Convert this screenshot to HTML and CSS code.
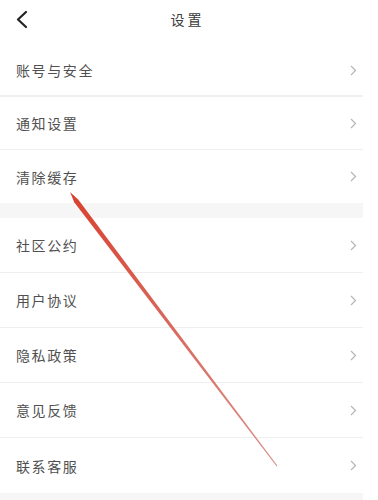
FILE: index.html
```html
<!DOCTYPE html>
<html lang="zh">
<head>
<meta charset="utf-8">
<link rel="stylesheet" href="styles.css">
</head>
<body>
<div class="page">
  <header class="header">
    <svg class="back" width="14" height="20" viewBox="0 0 14 20"><polyline points="10,3 2,10.5 10,18" fill="none" stroke="#222" stroke-width="2.2" stroke-linecap="round" stroke-linejoin="round"/></svg>
    <div class="title">设置</div>
  </header>
  <div class="group g1">
    <div class="row first"><span>账号与安全</span><svg class="chev" width="7" height="11" viewBox="0 0 7 11"><polyline points="1,1 5.5,5.5 1,10" fill="none" stroke="#b5b5b5" stroke-width="1.2"/></svg></div>
    <div class="row"><span>通知设置</span><svg class="chev" width="7" height="11" viewBox="0 0 7 11"><polyline points="1,1 5.5,5.5 1,10" fill="none" stroke="#b5b5b5" stroke-width="1.2"/></svg></div>
    <div class="row last"><span>清除缓存</span><svg class="chev" width="7" height="11" viewBox="0 0 7 11"><polyline points="1,1 5.5,5.5 1,10" fill="none" stroke="#b5b5b5" stroke-width="1.2"/></svg></div>
  </div>
  <div class="gap"></div>
  <div class="group g2">
    <div class="row"><span>社区公约</span><svg class="chev" width="7" height="11" viewBox="0 0 7 11"><polyline points="1,1 5.5,5.5 1,10" fill="none" stroke="#b5b5b5" stroke-width="1.2"/></svg></div>
    <div class="row"><span>用户协议</span><svg class="chev" width="7" height="11" viewBox="0 0 7 11"><polyline points="1,1 5.5,5.5 1,10" fill="none" stroke="#b5b5b5" stroke-width="1.2"/></svg></div>
    <div class="row"><span>隐私政策</span><svg class="chev" width="7" height="11" viewBox="0 0 7 11"><polyline points="1,1 5.5,5.5 1,10" fill="none" stroke="#b5b5b5" stroke-width="1.2"/></svg></div>
    <div class="row"><span>意见反馈</span><svg class="chev" width="7" height="11" viewBox="0 0 7 11"><polyline points="1,1 5.5,5.5 1,10" fill="none" stroke="#b5b5b5" stroke-width="1.2"/></svg></div>
    <div class="row last"><span>联系客服</span><svg class="chev" width="7" height="11" viewBox="0 0 7 11"><polyline points="1,1 5.5,5.5 1,10" fill="none" stroke="#b5b5b5" stroke-width="1.2"/></svg></div>
  </div>
  <div class="bottom"></div>
  <svg class="arrow" width="378" height="500" viewBox="0 0 378 500">
    <defs>
      <linearGradient id="ag" x1="71" y1="193" x2="277" y2="466" gradientUnits="userSpaceOnUse">
        <stop offset="0" stop-color="#d9412f"/>
        <stop offset="1" stop-color="#d9928e"/>
      </linearGradient>
    </defs>
    <polygon points="70,192 78.2,199.6 277.3,465.6 276.7,466.4 74.2,202.2" fill="url(#ag)"/>
  </svg>
</div>
</body>
</html>
```
FILE: styles.css
```css
html, body {
  margin: 0;
  padding: 0;
  background: #ffffff;
}
.page {
  position: relative;
  width: 363px;
  height: 500px;
  overflow: hidden;
  background: #ffffff;
  font-family: "Noto Sans CJK SC", "Noto Sans", sans-serif;
}
.header {
  height: 45px;
  display: flex;
  align-items: center;
  justify-content: center;
  position: relative;
}
.back {
  position: absolute;
  left: 16px;
  top: 9px;
}
.title {
  font-size: 14px;
  letter-spacing: 3px;
  color: #3a3a3a;
  margin-left: 12px;
  margin-top: -8px;
}
.row {
  display: flex;
  align-items: center;
  justify-content: space-between;
  padding: 0 6px 0 16px;
  border-bottom: 1px solid #efefef;
  box-sizing: border-box;
}
.g1 .row { height: 53px; }
.g1 .row.first { height: 52px; border-bottom: 2px solid #f0f0f0; }
.g1 .row.last { border-bottom: none; }
.g2 .row { height: 55px; }
.g2 .row.last { border-bottom: none; }
.row span {
  font-size: 14px;
  letter-spacing: 1.6px;
  color: #505050;
}
.gap {
  height: 15px;
  background: #f6f6f6;
}
.bottom {
  height: 10px;
  background: #f6f6f6;
}
.arrow {
  position: absolute;
  left: 0;
  top: 0;
  pointer-events: none;
}
```
